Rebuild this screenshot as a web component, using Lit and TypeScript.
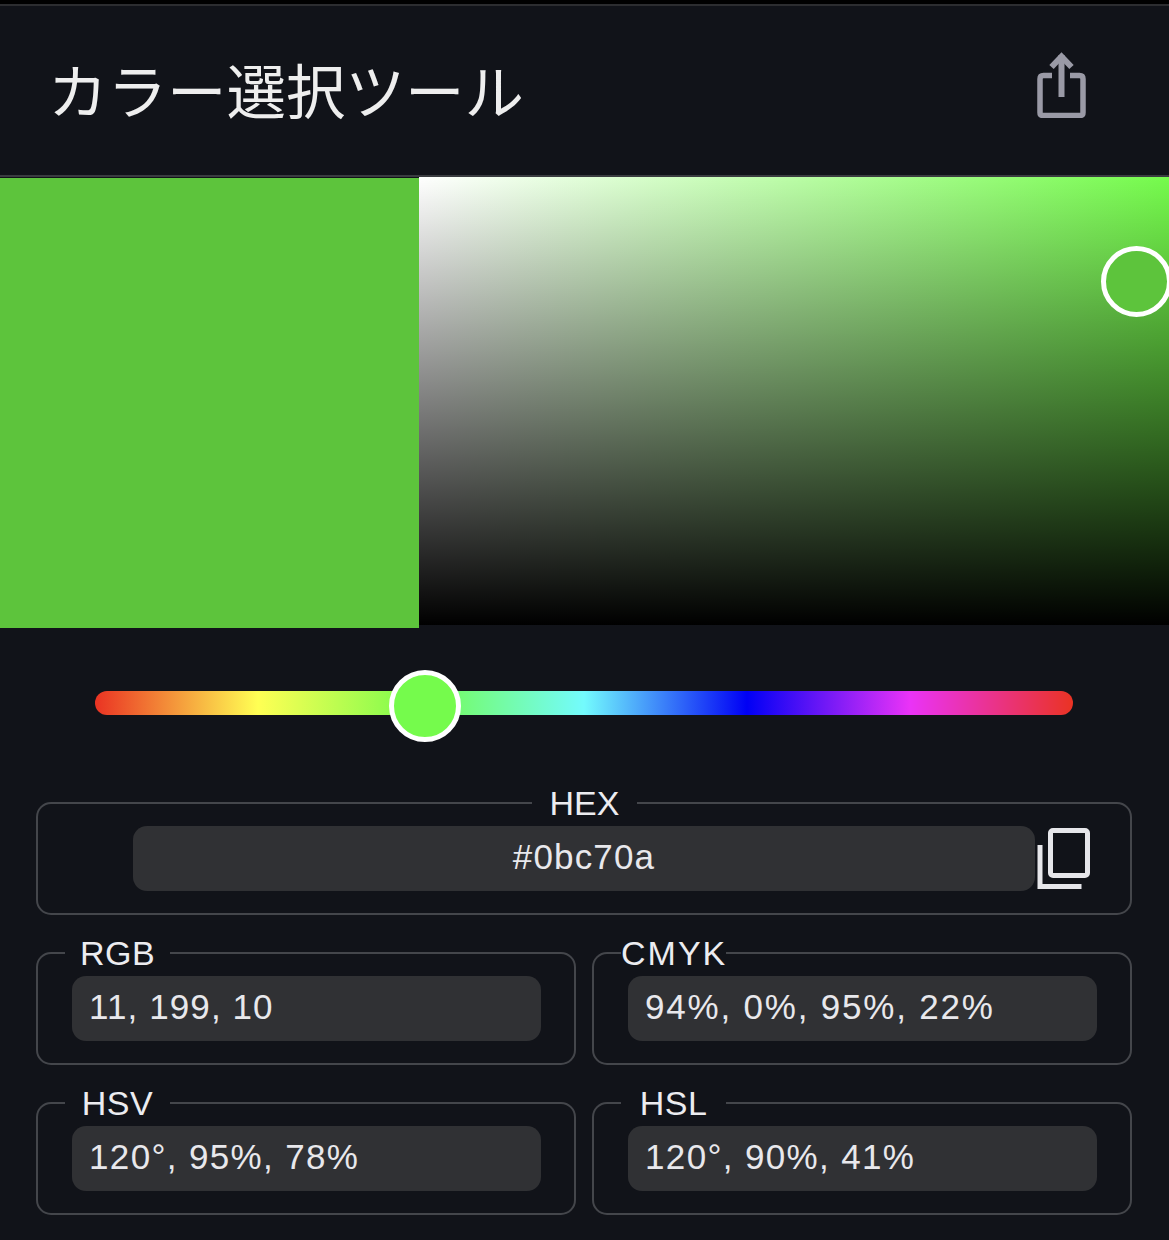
import { LitElement, html, css } from "lit";
import { customElement } from "lit/decorators.js";

@customElement("app-root")
export class AppRoot extends LitElement {
  static styles = css`
    :host {
      display: block;
      width: 1169px;
      height: 1240px;
      background: #111319;
      font-family: "Liberation Sans", sans-serif;
      color: #e8e8ec;
      overflow: hidden;
    }
    .statusbar { height: 4px; background: #000; }
    .header {
      box-sizing: border-box;
      height: 173px;
      border-top: 2.5px solid #2c2d30;
      border-bottom: 2px solid #3a3c40;
      background: #111319;
      display: flex;
      align-items: center;
      justify-content: space-between;
      padding: 0 83px 0 48px;
    }
    .title {
      font-family: "Noto Sans CJK JP", sans-serif;
      font-size: 59.5px;
      font-weight: 400;
      line-height: 1;
      color: #eeeeee;
      margin-top: -3px;
    }
    .share { display: block; width: 49px; height: 66px; margin-top: -11px; flex: none; }
    .picker { display: flex; align-items: flex-start; height: 451px; }
    .swatch { width: 419px; height: 450px; margin-top: 1px; background: #5dc43c; flex: none; }
    .plane {
      position: relative;
      flex: 1;
      height: 448px;
      overflow: hidden;
      background: linear-gradient(to bottom, rgba(0,0,0,0), #000), linear-gradient(to right, #fff, #75fb4c);
    }
    .handle {
      position: absolute;
      box-sizing: border-box;
      left: 682px;
      top: 69px;
      width: 71px;
      height: 71px;
      border-radius: 50%;
      border: 5px solid #fff;
      background: #5dc43c;
    }
    .slider { position: relative; margin: 63px 96px 0 95px; height: 24px; border-radius: 12px;
      background: linear-gradient(to right, #ea3323 0%, #ffff54 16.667%, #75fb4c 33.333%, #73fbfd 50%, #0000f5 66.667%, #ea33f7 83.333%, #ea3323 100%);
    }
    .thumb {
      position: absolute;
      box-sizing: border-box;
      left: 294px;
      top: -21px;
      width: 72px;
      height: 72px;
      border-radius: 50%;
      border: 5px solid #fff;
      background: #75fb4c;
    }
    .fields {
      display: grid;
      grid-template-columns: 540px 540px;
      column-gap: 16px;
      margin: 70px 37px 0 36px;
    }
    fieldset {
      box-sizing: border-box;
      margin: 0;
      min-width: 0;
      height: 130px;
      border: 2px solid #44464b;
      border-radius: 15px;
      padding: 5px 33px 22px 34px;
    }
    .wide { grid-column: 1 / 3; display: block; padding: 5px 40px 22px 95px; margin-bottom: 20px; }
    .rowgap { margin-bottom: 20px; }
    legend {
      box-sizing: border-box;
      width: 105px;
      padding: 0;
      margin: 0 auto 0 -7px;
      height: 36px;
      line-height: 36px;
      font-size: 34px;
      letter-spacing: 0.5px;
      text-align: center;
      white-space: nowrap;
      color: #ececf0;
    }
    .wide legend { margin: 0 auto 0 399px; letter-spacing: 0; }
    .cmyk legend { letter-spacing: 2px; }
    .hexrow { display: flex; align-items: flex-start; }
    .value {
      box-sizing: border-box;
      flex: 1;
      height: 65px;
      line-height: 62px;
      padding: 0 17px;
      background: #303134;
      border-radius: 14px;
      font-size: 35px;
      letter-spacing: 1.35px;
      color: #e8e8ec;
      white-space: nowrap;
    }
    .rgb .value { letter-spacing: 1.1px; }
    .cmyk .value { letter-spacing: 1.8px; }
    .hex { text-align: center; padding: 0; letter-spacing: 1.15px; }
    .copy { display: block; width: 55px; height: 62px; margin-top: 2px; flex: none; }
  `;

  private field(label: string, value: string, cls = "") {
    return html`<fieldset class=${cls}>
      <legend>${label}</legend>
      <div class="value">${value}</div>
    </fieldset>`;
  }

  render() {
    return html`
      <div class="statusbar"></div>
      <header class="header">
        <div class="title">カラー選択ツール</div>
        <svg class="share" viewBox="0 0 49 66" fill="none" stroke="#9a9aa6">
          <path d="M15 23.5H6.5Q3 23.5 3 27V60.5Q3 63.5 6 63.5H43Q46 63.5 46 60.5V27Q46 23.5 42.5 23.5H33" stroke-width="5.5" />
          <path d="M24.5 3V45" stroke-width="6" />
          <path d="M14.5 15L24.5 4.5L34.5 15" stroke-width="6" />
        </svg>
      </header>
      <div class="picker">
        <div class="swatch"></div>
        <div class="plane"><div class="handle"></div></div>
      </div>
      <div class="slider"><div class="thumb"></div></div>
      <div class="fields">
        <fieldset class="wide">
          <legend>HEX</legend>
          <div class="hexrow">
            <div class="value hex">#0bc70a</div>
            <svg class="copy" viewBox="0 0 55 62" fill="none" stroke="#e6e6ea" stroke-width="5">
              <rect x="15.5" y="2.5" width="37" height="45" rx="2.5" />
              <path d="M5 17V58.5H46.5" />
            </svg>
          </div>
        </fieldset>
        ${this.field("RGB", "11, 199, 10", "rowgap rgb")}
        ${this.field("CMYK", "94%, 0%, 95%, 22%", "rowgap cmyk")}
        ${this.field("HSV", "120°, 95%, 78%")}
        ${this.field("HSL", "120°, 90%, 41%")}
      </div>
    `;
  }
}
